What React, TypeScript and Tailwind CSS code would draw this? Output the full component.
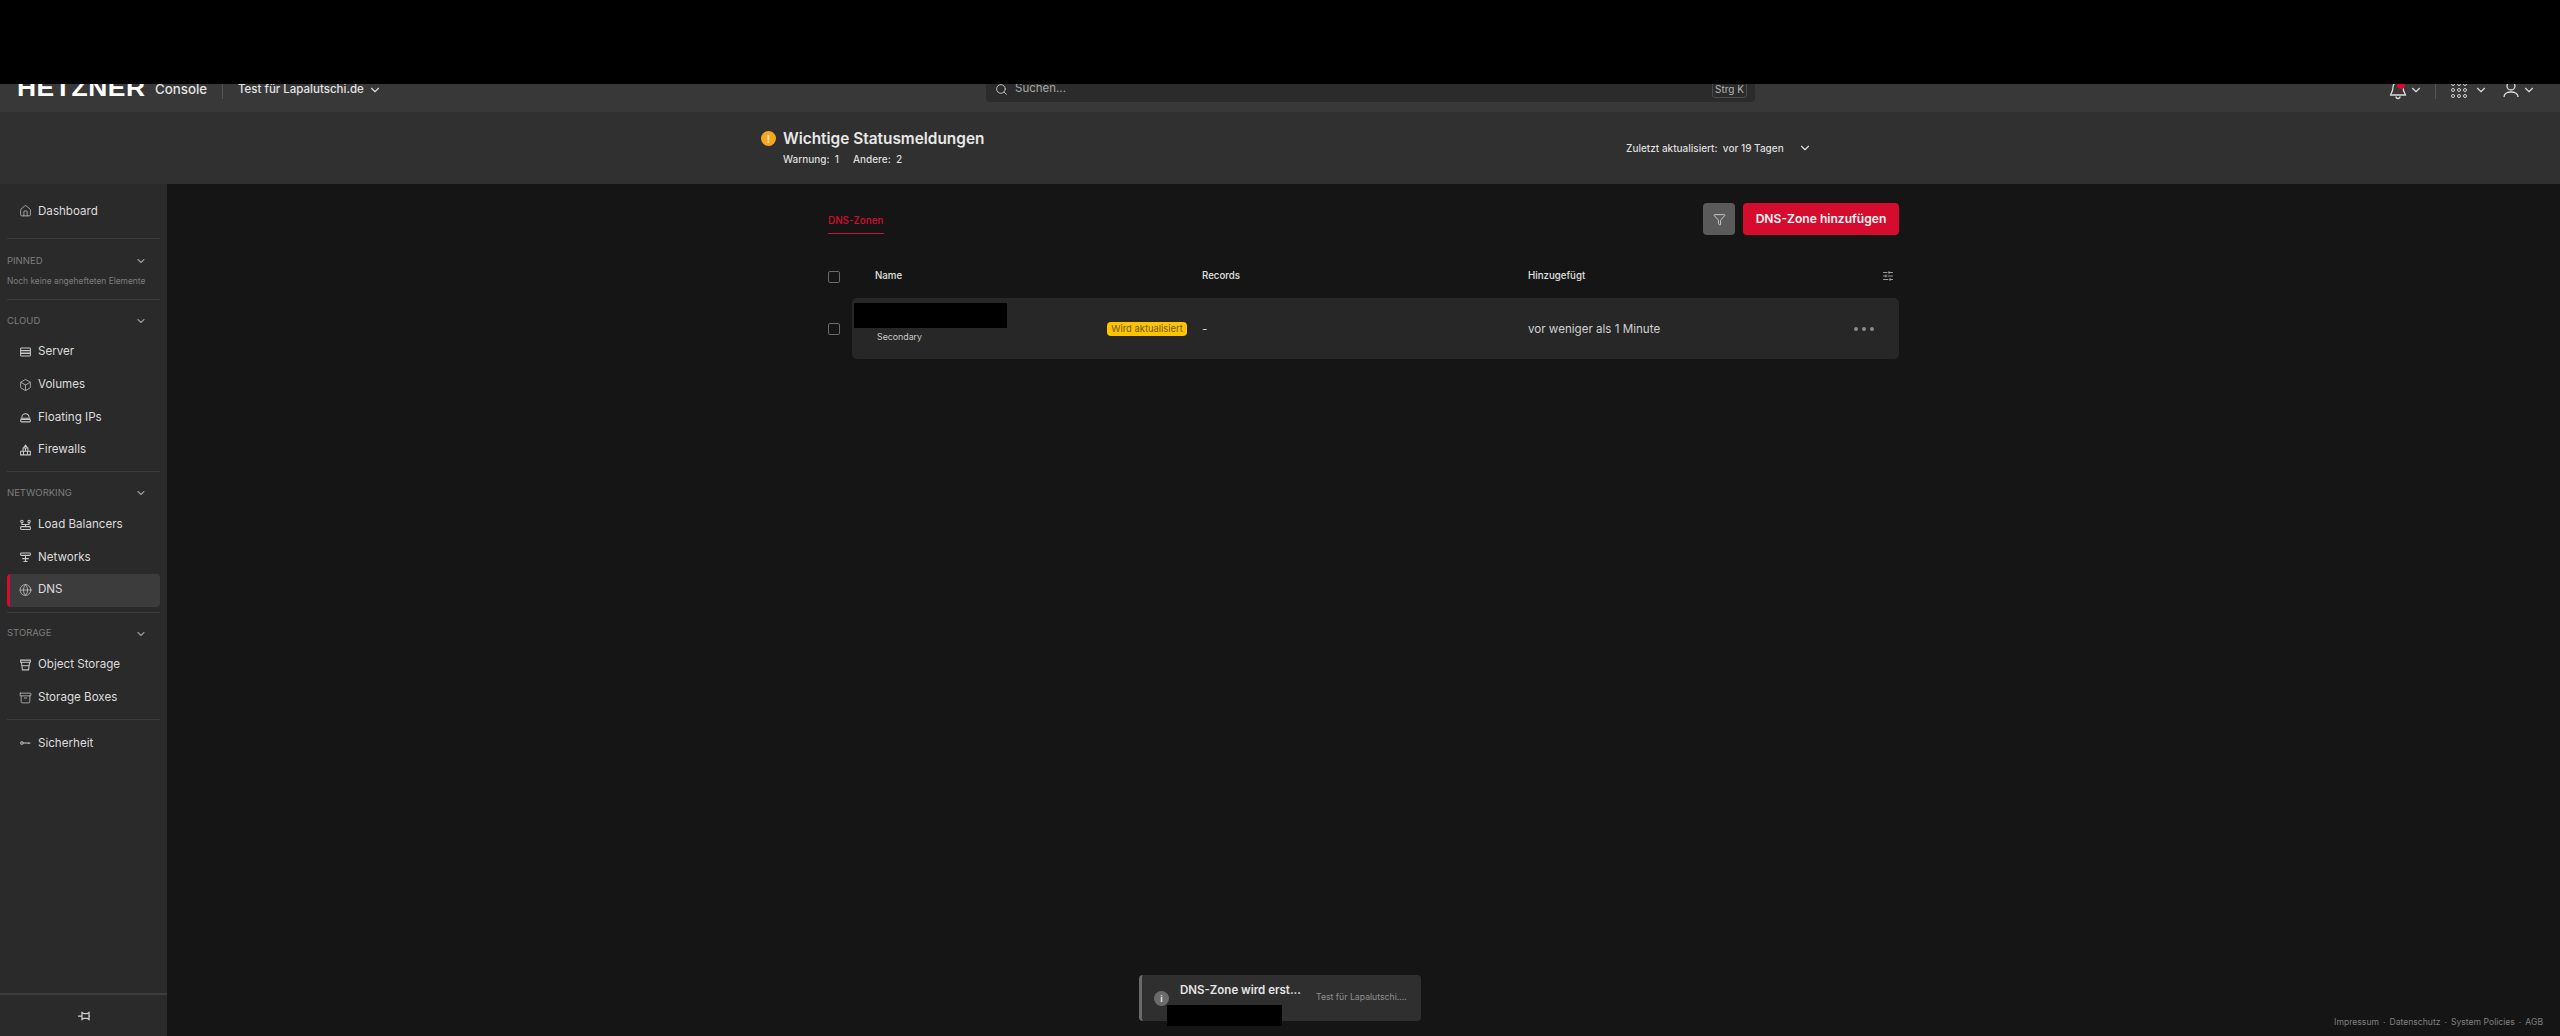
import { Archive, Box, ChevronDown, Filter, Globe, House, Search, SlidersHorizontal } from 'lucide-react';
import type { ReactNode } from 'react';

const iconProps = { width: 16, height: 16, viewBox: '0 0 16 16', fill: 'none', stroke: 'currentColor', strokeWidth: 1.25 };

function ServerIcon() {
  return (
    <svg {...iconProps}>
      <rect x="2" y="3" width="12" height="10" rx="1" />
      <path d="M2 6.300h12M2 9.600h12" strokeWidth="1.700" />
    </svg>
  );
}

function CloudIcon() {
  return (
    <svg {...iconProps}>
      <path d="M3.500 8.500a4.500 4.500 0 0 1 9 0M2 9.500h12" />
      <rect x="2" y="11" width="12" height="3" rx="1" />
    </svg>
  );
}

function FirewallIcon() {
  return (
    <svg {...iconProps}>
      <path d="M8 2 10.500 5.500h-5L8 2ZM5 5.500h6v4H5v-4ZM2 9.500h12v4.500H2V9.500ZM8 5.500v4M5.500 9.500V14M10.500 9.500V14" />
    </svg>
  );
}

function BalancerIcon() {
  return (
    <svg {...iconProps}>
      <circle cx="3.600" cy="3.600" r="1.500" />
      <circle cx="12.400" cy="3.600" r="1.500" />
      <path d="M3.600 5.100v2.400h8.800V5.100M8 7.500v2.500" />
      <rect x="2" y="10" width="12" height="3.500" rx="1" />
    </svg>
  );
}

function NetworkIcon() {
  return (
    <svg {...iconProps}>
      <rect x="2" y="3" width="12" height="3" rx="0.800" />
      <path d="M8 6v7.500M4 10h8M5.500 13.500h5" />
    </svg>
  );
}

function BucketIcon() {
  return (
    <svg {...iconProps}>
      <path d="M2 2h12v2.500H2zM3 4.500 4.200 14h7.600L13 4.500M3.500 9h9" />
    </svg>
  );
}

function KeyIcon() {
  return (
    <svg {...iconProps}>
      <circle cx="3.600" cy="8" r="1.600" />
      <path d="M5.200 8H14M12 8v1.300" />
    </svg>
  );
}

function PinIcon() {
  return (
    <svg {...iconProps}>
      <path d="M2 8h4M6 4.500v7l1.800-1.200h3.400l1.800 1.200v-7l-1.800 1.200H7.800L6 4.500ZM13 8h1" />
    </svg>
  );
}

function HeaderChevron() {
  return <ChevronDown className="h-3.5 w-3.5 text-[#d8d8d8]" strokeWidth={2} />;
}

function NavItem({ icon, label, active }: { icon: ReactNode; label: string; active?: boolean }) {
  return (
    <div
      className={`flex h-[32.7px] items-center gap-[5px] rounded-[4px] border-l-[3px] pl-[9px] text-[11.6px] text-[#dcdcdc] ${active ? 'border-[#d50c2d] bg-[#3c3c3c]' : 'border-transparent'}`}
    >
      <span className="flex w-[13px] justify-center text-[#c8c8c8]">{icon}</span>
      <span className="ml-[1px]">{label}</span>
    </div>
  );
}

function NavGroup({ title, children }: { title: string; children: ReactNode }) {
  return (
    <div className="border-t border-[#3d3d3d] pb-[5px] pt-[13px]">
      <div className="flex h-[16px] items-center justify-between pr-[13px] text-[9.5px] text-[#7d7d7d]">
        <span>{title}</span>
        <ChevronDown className="h-3 w-3 text-[#9a9a9a]" strokeWidth={2.2} />
      </div>
      <div className="mt-[7px]">{children}</div>
    </div>
  );
}

function Sidebar() {
  const ic = 'h-[14px] w-[14px]';
  return (
    <aside className="flex w-[167px] shrink-0 flex-col bg-[#2a2a2a]">
      <div className="flex-1 px-[7px] pt-[11px]">
        <div className="pb-[10px]">
          <NavItem icon={<House className={ic} strokeWidth={1.4} />} label="Dashboard" />
        </div>
        <div className="h-[61px] border-t border-[#3d3d3d] pt-[14px]">
          <div className="flex h-[16px] items-center justify-between pr-[13px] text-[9.5px] text-[#7d7d7d]">
            <span>PINNED</span>
            <ChevronDown className="h-3 w-3 text-[#9a9a9a]" strokeWidth={2.2} />
          </div>
          <div className="mt-[6px] whitespace-nowrap text-[8.4px] text-[#7d7d7d]">Noch keine angehefteten Elemente</div>
        </div>
        <NavGroup title="CLOUD">
          <NavItem icon={<ServerIcon />} label="Server" />
          <NavItem icon={<Box className={ic} strokeWidth={1.4} />} label="Volumes" />
          <NavItem icon={<CloudIcon />} label="Floating IPs" />
          <NavItem icon={<FirewallIcon />} label="Firewalls" />
        </NavGroup>
        <NavGroup title="NETWORKING">
          <NavItem icon={<BalancerIcon />} label="Load Balancers" />
          <NavItem icon={<NetworkIcon />} label="Networks" />
          <NavItem icon={<Globe className={ic} strokeWidth={1.4} />} label="DNS" active />
        </NavGroup>
        <NavGroup title="STORAGE">
          <NavItem icon={<BucketIcon />} label="Object Storage" />
          <NavItem icon={<Archive className={ic} strokeWidth={1.4} />} label="Storage Boxes" />
        </NavGroup>
        <div className="border-t border-[#3d3d3d] pt-[7px]">
          <NavItem icon={<KeyIcon />} label="Sicherheit" />
        </div>
      </div>
      <div className="flex h-[43px] items-center justify-center border-t-2 border-[#3d3d3d] text-[#d0d0d0]">
        <PinIcon />
      </div>
    </aside>
  );
}

function Header() {
  return (
    <header className="flex h-[112px] shrink-0 items-end bg-[#383838] pb-[6px] text-[#e2e2e2]">
      <div className="flex h-[32px] w-full items-center pl-[17px]">
        <span className="mb-[5px] w-[128px] origin-left scale-x-[1.1] font-['Liberation_Sans',sans-serif] text-[24px] font-bold leading-none tracking-[0.5px] text-white">
          HETZNER
        </span>
        <span className="ml-[10px] w-[51px] text-[13.3px] font-medium">Console</span>
        <span className="ml-[16px] h-[17px] w-px bg-[#555555]" />
        <span className="ml-[15px] w-[125px] whitespace-nowrap text-[11.5px] font-medium">Test für Lapalutschi.de</span>
        <span className="ml-[5px]"><HeaderChevron /></span>
        <div className="mb-[4px] ml-[604px] flex h-[40px] w-[769px] items-center self-end rounded-[4px] bg-[#2b2b2b] pl-[9px] pr-[8px] pt-[14px]">
          <Search className="h-[13px] w-[13px] text-[#c0c0c0]" strokeWidth={1.8} />
          <span className="ml-[7px] text-[11.5px] text-[#a5a5a5]">Suchen...</span>
          <span className="ml-auto rounded-[3px] border border-[#4a4a4a] px-[2px] text-[10px] text-[#b5b5b5]">Strg K</span>
        </div>
        <div className="ml-auto flex items-center pr-[24px]">
          <span className="relative text-[#dcdcdc]">
            <svg width="18" height="20" viewBox="0 0 18 20" fill="none" stroke="currentColor" strokeWidth="1.3">
              <path d="M9 2a5 5 0 0 0-5 5c0 5-2.500 7-2.500 8h15c0-1-2.500-3-2.500-8a5 5 0 0 0-5-5ZM7 16.500a2 2 0 0 0 4 0" />
            </svg>
            <span className="absolute right-[2px] top-[1px] h-[8px] w-[8px] rounded-full bg-[#d50c2d]" />
          </span>
          <span className="ml-[2px]"><HeaderChevron /></span>
          <span className="ml-[12px] h-[17px] w-px bg-[#555555]" />
          <span className="ml-[15px] grid grid-cols-3 gap-[2px]">
            {Array.from({ length: 9 }).map((_, i) => (
              <span key={i} className="h-[4px] w-[4px] rounded-full border border-[#d0d0d0]" />
            ))}
          </span>
          <span className="ml-[7px]"><HeaderChevron /></span>
          <svg className="ml-[15px] text-[#dcdcdc]" width="16" height="20" viewBox="0 0 16 20" fill="none" stroke="currentColor" strokeWidth="1.3">
            <circle cx="8" cy="6" r="4" />
            <path d="M1 17c0-3 3-5 7-5s7 2 7 5" />
          </svg>
          <span className="ml-[3px]"><HeaderChevron /></span>
        </div>
      </div>
    </header>
  );
}

function StatusBar() {
  return (
    <section className="flex h-[72px] shrink-0 items-center bg-[#303030] pl-[761px] text-[#dedede]">
      <div className="mb-[2px] w-[865px]">
        <div className="flex items-center gap-[7px]">
          <span className="flex h-[15px] w-[15px] items-center justify-center rounded-full bg-[#f5a623] text-[10px] font-bold leading-none text-[#fde3b0]">!</span>
          <span className="text-[15.4px] font-semibold leading-[22px] text-[#e8e8e8]">Wichtige Statusmeldungen</span>
        </div>
        <div className="ml-[22px] mt-[2px] flex gap-[14px] text-[10px] font-medium">
          <span>Warnung:&nbsp; 1</span>
          <span>Andere:&nbsp; 2</span>
        </div>
      </div>
      <div className="flex items-center text-[10px] font-medium">
        <span>Zuletzt aktualisiert:&nbsp; vor 19 Tagen</span>
        <ChevronDown className="ml-[14px] h-3.5 w-3.5" strokeWidth={2} />
      </div>
    </section>
  );
}

function Checkbox() {
  return <span className="h-[12px] w-[12px] shrink-0 rounded-[2px] border-[1.5px] border-[#6a6a6a]" />;
}

function ZoneTable() {
  return (
    <div className="mt-[25px]">
      <div className="flex h-[33px] items-center">
        <Checkbox />
        <div className="ml-[12px] grid flex-1 grid-cols-[350px_326px_1fr_auto] items-center pr-[5px] text-[9.7px] font-medium text-[#e0e0e0]">
          <span className="pl-[23px]">Name</span>
          <span>Records</span>
          <span>Hinzugefügt</span>
          <SlidersHorizontal className="h-[12px] w-[12px] text-[#c0c0c0]" strokeWidth={1.6} />
        </div>
      </div>
      <div className="mt-[5px] flex h-[61px] items-center">
        <Checkbox />
        <div className="relative ml-[12px] grid h-full flex-1 grid-cols-[255px_95px_326px_1fr_auto] items-center rounded-[5px] bg-[#272727] pr-[25px]">
          <span aria-hidden className="absolute left-[2px] top-[5px] h-[25px] w-[153px] bg-black" />
          <span className="self-end pb-[16px] pl-[25px] text-[8.8px] text-[#c9c9c9]">Secondary</span>
          <span className="flex h-[14px] w-[80px] items-center justify-center rounded-[4px] bg-[#ffc400] text-[9.4px] leading-none text-[#6b5a10]">Wird aktualisiert</span>
          <span className="pt-[2px] text-[11.6px] text-[#d0d0d0]">-</span>
          <span className="pt-[2px] text-[11.6px] text-[#d0d0d0]">vor weniger als 1 Minute</span>
          <span className="flex gap-[4px]">
            <span className="h-[4px] w-[4px] rounded-full bg-[#8c8c8c]" />
            <span className="h-[4px] w-[4px] rounded-full bg-[#8c8c8c]" />
            <span className="h-[4px] w-[4px] rounded-full bg-[#8c8c8c]" />
          </span>
        </div>
      </div>
    </div>
  );
}

function Toast() {
  return (
    <div className="absolute left-[1139px] top-[791px] flex h-[46px] w-[282px] items-center rounded-[4px] border-l-[3px] border-[#6a6a6a] bg-[#2f2f2f]">
      <span className="ml-[12px] flex h-[15px] w-[15px] items-center justify-center rounded-full bg-[#6b6b6b] text-[9px] font-bold leading-none text-[#e0e0e0]">i</span>
      <span className="mb-[14px] ml-[11px] w-[136px] whitespace-nowrap text-[11.5px] font-semibold text-[#e4e4e4]">DNS-Zone wird erst...</span>
      <span className="whitespace-nowrap text-[8.7px] text-[#8f8f8f]">Test für Lapalutschi....</span>
      <span aria-hidden className="absolute left-[25px] top-[30px] h-[21px] w-[115px] bg-black" />
    </div>
  );
}

export default function App() {
  return (
    <div className="relative flex h-[1036px] w-[2560px] flex-col overflow-hidden bg-[#151515] font-['Inter',sans-serif]">
      <div aria-hidden className="absolute inset-x-0 top-0 z-10 h-[84px] bg-black" />
      <Header />
      <StatusBar />
      <div className="relative flex min-h-0 flex-1">
        <Sidebar />
        <main className="flex flex-1 flex-col">
          <div className="mx-auto w-[1071px] pt-[19px]">
            <div className="flex items-start justify-between">
              <div className="h-[31px] border-b-[1.5px] border-[#d50c2d] pt-[10px] text-[9.9px] font-medium text-[#d50c2d]">
                DNS-Zonen
              </div>
              <div className="flex gap-[8px]">
                <button className="flex h-[32px] w-[32px] items-center justify-center rounded-[4px] bg-[#5a5a5a] text-[#d8d8d8]">
                  <Filter className="h-[13px] w-[13px]" strokeWidth={1.6} />
                </button>
                <button className="h-[32px] w-[156px] rounded-[4px] bg-[#d50c2d] text-[12.1px] font-semibold text-[#f5f5f5]">
                  DNS-Zone hinzufügen
                </button>
              </div>
            </div>
            <ZoneTable />
          </div>
          <footer className="mb-[7px] mr-[17px] mt-auto flex items-center justify-end gap-[4px] text-[8.6px] text-[#808080]">
            <span>Impressum</span>
            <span>·</span>
            <span>Datenschutz</span>
            <span>·</span>
            <span>System Policies</span>
            <span>·</span>
            <span>AGB</span>
          </footer>
        </main>
        <Toast />
      </div>
    </div>
  );
}
